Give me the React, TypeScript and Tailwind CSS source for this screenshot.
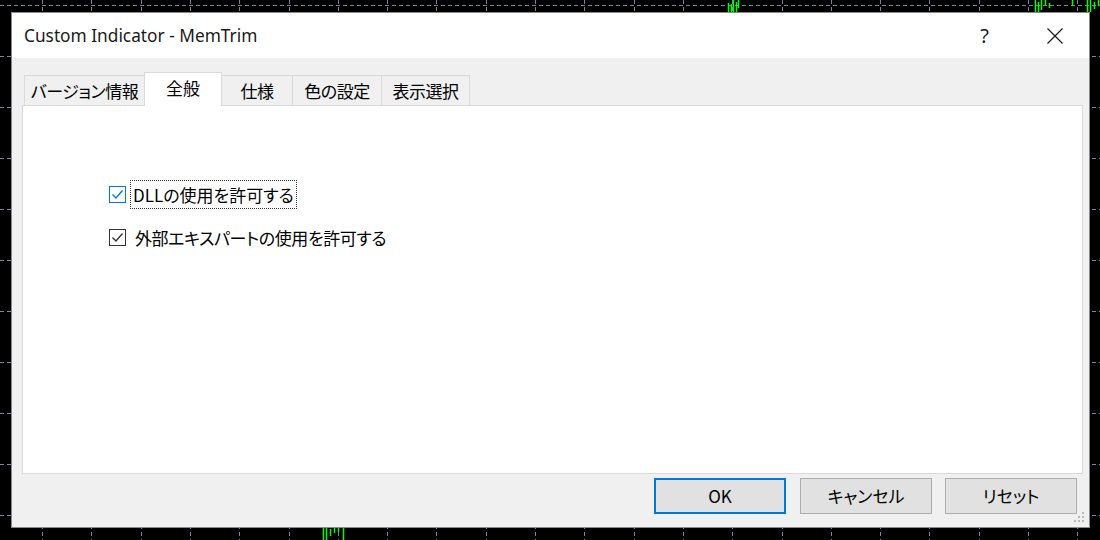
import React from "react";

const GRID = "#778899";

function ChartBg() {
  const vx: number[] = [];
  for (let i = 0; i < 23; i++) vx.push(42 + i * 49.3);
  const hy: number[] = [];
  for (let i = 0; i < 11; i++) hy.push(5 + i * 51);
  return (
    <svg className="absolute inset-0" width={1100} height={540}>
      {hy.map((y) => (
        <line key={"h" + y} x1={0} x2={1100} y1={Math.round(y) + 0.5} y2={Math.round(y) + 0.5} stroke={GRID} strokeWidth={1} strokeDasharray="4 3" />
      ))}
      {vx.map((x) => (
        <line key={"v" + x} x1={Math.round(x) + 0.5} x2={Math.round(x) + 0.5} y1={0} y2={540} stroke={GRID} strokeWidth={1} strokeDasharray="4 3" />
      ))}
      <g stroke="#00ff00" strokeWidth={1.5}>
        <line x1={728.5} x2={728.5} y1={3} y2={12} />
        <line x1={731.5} x2={731.5} y1={4} y2={12} />
        <line x1={733.5} x2={733.5} y1={0} y2={12} />
        <line x1={736.5} x2={736.5} y1={2} y2={12} />
        <line x1={738.5} x2={738.5} y1={0} y2={8} />
        <line x1={1035.5} x2={1035.5} y1={0} y2={12} />
        <line x1={1038.5} x2={1038.5} y1={2} y2={12} />
        <line x1={1041.5} x2={1041.5} y1={0} y2={10} />
        <line x1={1045.5} x2={1045.5} y1={0} y2={5} />
        <line x1={1049.5} x2={1049.5} y1={3} y2={8} />
        <line x1={1072.5} x2={1072.5} y1={0} y2={6} />
        <line x1={1087.5} x2={1087.5} y1={0} y2={12} />
        <line x1={1090.5} x2={1090.5} y1={0} y2={12} />
        <line x1={1094.5} x2={1094.5} y1={2} y2={9} />
        <line x1={1098.5} x2={1098.5} y1={0} y2={6} />
        <line x1={323.5} x2={323.5} y1={528} y2={540} />
        <line x1={326.5} x2={326.5} y1={528} y2={540} />
        <line x1={330.5} x2={330.5} y1={529} y2={536} />
        <line x1={334.5} x2={334.5} y1={528} y2={533} />
        <line x1={338.5} x2={338.5} y1={528} y2={532} />
        <line x1={343.5} x2={343.5} y1={528} y2={540} />
      </g>
    </svg>
  );
}

function CheckBox({ focused }: { focused?: boolean }) {
  const c = focused ? "#0078d7" : "#333333";
  return (
    <svg width={17} height={17} viewBox="0 0 17 17" className="shrink-0">
      <rect x={0.5} y={0.5} width={16} height={16} fill="#ffffff" stroke={c} strokeWidth={1} />
      <path d="M3.5 8.5 L7 12 L13.5 4.5" fill="none" stroke={c} strokeWidth={1.4} />
    </svg>
  );
}

const jp = "font-['Noto_Sans_CJK_JP','Noto_Sans',sans-serif] [font-feature-settings:'palt']";

export default function App() {
  const tabs = [
    { label: "バージョン情報", w: "w-[121px]" },
    { label: "全般", w: "w-[78px]", sel: true },
    { label: "仕様", w: "w-[72px]" },
    { label: "色の設定", w: "w-[90px]" },
    { label: "表示選択", w: "w-[89px]" },
  ];
  return (
    <div className={`relative w-[1100px] h-[540px] bg-black overflow-hidden ${jp} text-[#000]`}>
      <ChartBg />
      <div className="absolute left-[11px] top-[12px] w-[1079px] h-[516px] border border-[#8a8a8a] bg-[#f0f0f0] flex flex-col">
        <div className="h-[45px] bg-white flex items-center pl-[12px] shrink-0">
          <span className="font-['Noto_Sans',sans-serif] text-[17.3px] text-[#1a1a1a]">Custom Indicator - MemTrim</span>
          <span className="ml-auto mr-[58px] font-['Noto_Sans',sans-serif] text-[20px] text-[#1a1a1a]">?</span>
          <svg width={16} height={16} viewBox="0 0 16 16" className="mr-[26px]">
            <path d="M0.5 0.5 L15.5 15.5 M15.5 0.5 L0.5 15.5" stroke="#1a1a1a" strokeWidth={1.2} />
          </svg>
        </div>
        <div className="flex-1 flex flex-col pt-[14px] pl-[10px] pr-[6px] pb-[13px]">
          <div className="flex items-end h-[33px] pl-[3px]">
            {tabs.map((t, i) =>
              t.sel ? (
                <div
                  key={i}
                  className={`${t.w} h-[34px] -mb-px -ml-px relative z-10 bg-white border border-b-0 border-[#d9d9d9] flex items-center justify-center text-[17px] pb-[3px]`}
                >
                  {t.label}
                </div>
              ) : (
                <div
                  key={i}
                  className={`${t.w} h-[30px] -ml-px bg-[#f0f0f0] border border-b-0 border-[#d9d9d9] flex items-center justify-center text-[17px] tracking-[-0.5px]`}
                >
                  {t.label}
                </div>
              )
            )}
          </div>
          <div className="h-[369px] bg-white border border-[#d9d9d9] pt-[74px] pl-[86px] flex flex-col">
            <div className="flex items-center h-[29px]">
              <CheckBox focused />
              <span className="ml-[4px] border border-dotted border-[#333] h-[29px] flex items-center px-[2px] text-[17px]">
                DLLの使用を許可する
              </span>
            </div>
            <div className="flex items-center h-[29px] mt-[14px]">
              <CheckBox />
              <span className="ml-[9px] text-[17px] tracking-[-0.4px]">外部エキスパートの使用を許可する</span>
            </div>
          </div>
          <div className="flex justify-end gap-[13px] mt-[4px] pr-[6px]">
            <div className="w-[132px] h-[36px] bg-[#e1e1e1] border-2 border-[#0078d7] flex items-center justify-center text-[17px]">OK</div>
            <div className="w-[132px] h-[36px] bg-[#e1e1e1] border border-[#adadad] flex items-center justify-center text-[17px] ml-px">キャンセル</div>
            <div className="w-[132px] h-[36px] bg-[#e1e1e1] border border-[#adadad] flex items-center justify-center text-[17px]">リセット</div>
          </div>
        </div>
        <svg width={12} height={12} viewBox="0 0 12 12" className="absolute right-[3px] bottom-[3px]">
          <g fill="#b8b8b8">
            <rect x={8} y={0} width={2} height={2} />
            <rect x={4} y={4} width={2} height={2} />
            <rect x={8} y={4} width={2} height={2} />
            <rect x={0} y={8} width={2} height={2} />
            <rect x={4} y={8} width={2} height={2} />
            <rect x={8} y={8} width={2} height={2} />
          </g>
        </svg>
      </div>
    </div>
  );
}
